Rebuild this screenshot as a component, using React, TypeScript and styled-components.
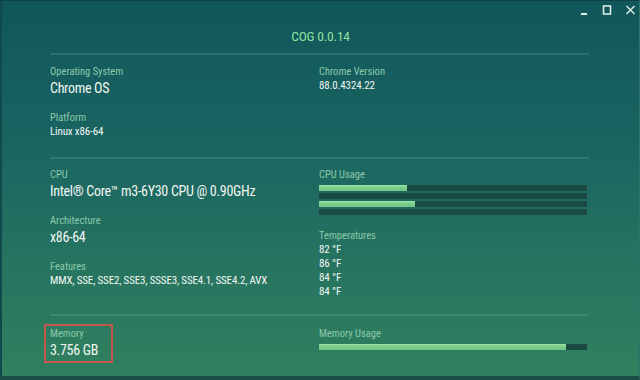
import React from 'react';
import styled, { createGlobalStyle } from 'styled-components';

const GlobalStyle = createGlobalStyle`
  html, body {
    margin: 0;
    padding: 0;
    width: 640px;
    height: 380px;
    overflow: hidden;
    font-family: "Roboto Condensed", "Liberation Sans Narrow", Roboto, sans-serif;
  }
`;

const Window = styled.div`
  width: 640px;
  height: 380px;
  box-sizing: border-box;
  background: linear-gradient(to bottom, #11565a 0%, #1a6562 40%, #267460 70%, #31805f 100%);
  border-top: 1px solid #0d4347;
  border-left: 2px solid #0f4b4d;
  border-right: 1px solid #2b7467;
  border-bottom: 4px solid #1a4d46;
  display: flex;
  flex-direction: column;
`;

const TitleBar = styled.div`
  position: relative;
  height: 52px;
  display: flex;
  align-items: flex-end;
  justify-content: center;
  padding-bottom: 9px;
  box-sizing: border-box;
`;

const Title = styled.div`
  color: #8ee29c;
  font-size: 13.5px;
  line-height: 16px;
  letter-spacing: -0.2px;
`;

const Controls = styled.div`
  position: absolute;
  top: 3px;
  right: 3px;
  display: flex;
  gap: 13px;
  align-items: center;
`;

const Content = styled.div`
  padding: 0 50px 0 48px;
  display: flex;
  flex-direction: column;
`;

const Section = styled.section<{ $top: number; $height: number }>`
  border-top: 2px solid rgba(120, 190, 160, 0.22);
  padding-top: ${(p) => p.$top}px;
  height: ${(p) => p.$height}px;
  box-sizing: border-box;
  display: grid;
  grid-template-columns: 269px 268px;
  align-items: start;
`;

const Column = styled.div`
  display: flex;
  flex-direction: column;
  gap: 14px;
`;

const Field = styled.div`
  position: relative;
  display: flex;
  flex-direction: column;
  gap: 1px;
`;

const Marker = styled.div`
  position: absolute;
  left: -6px;
  top: -3px;
  width: 69px;
  height: 39px;
  box-sizing: border-box;
  border: 2px solid #c4584c;
`;

const Label = styled.div`
  color: #8cc9a9;
  font-size: 10.5px;
  line-height: 13px;
`;

const Value = styled.div<{ $big?: boolean }>`
  color: #f2f6f2;
  font-size: ${(p) => (p.$big ? '14px' : '11px')};
  line-height: ${(p) => (p.$big ? '18px' : '14px')};
  letter-spacing: ${(p) => (p.$big ? '-0.3px' : '-0.15px')};
`;

const Bars = styled.div`
  display: flex;
  flex-direction: column;
  gap: 2px;
  margin-top: 3px;
`;

const Track = styled.div`
  height: 6px;
  background: #1b4a43;
`;

const Fill = styled.div`
  height: 100%;
  background: linear-gradient(to bottom, #9fe3a6 0%, #7dd08a 40%, #74c583 100%);
`;

const Temps = styled.div`
  display: flex;
  flex-direction: column;
`;

function Bar({ pct }: { pct: number }) {
  return (
    <Track>
      <Fill style={{ width: `${pct}%` }} />
    </Track>
  );
}

const iconColor = '#d9ece6';

export default function App() {
  return (
    <>
      <GlobalStyle />
      <Window>
        <TitleBar>
          <Title>COG 0.0.14</Title>
          <Controls>
            <svg width="10" height="12" viewBox="0 0 10 12">
              <rect x="2" y="9" width="6" height="2" fill={iconColor} />
            </svg>
            <svg width="10" height="12" viewBox="0 0 10 12">
              <rect x="1.5" y="2" width="7" height="8" fill="none" stroke={iconColor} strokeWidth="1.6" />
            </svg>
            <svg width="11" height="12" viewBox="0 0 11 12">
              <path d="M1.5 2 L9.5 10 M9.5 2 L1.5 10" stroke={iconColor} strokeWidth="1.5" />
            </svg>
          </Controls>
        </TitleBar>
        <Content>
          <Section $top={10} $height={104}>
            <Column>
              <Field>
                <Label>Operating System</Label>
                <Value $big>Chrome OS</Value>
              </Field>
              <Field>
                <Label>Platform</Label>
                <Value>Linux x86-64</Value>
              </Field>
            </Column>
            <Column>
              <Field>
                <Label>Chrome Version</Label>
                <Value>88.0.4324.22</Value>
              </Field>
            </Column>
          </Section>
          <Section $top={9} $height={157}>
            <Column>
              <Field>
                <Label>CPU</Label>
                <Value $big>Intel® Core™ m3-6Y30 CPU @ 0.90GHz</Value>
              </Field>
              <Field>
                <Label>Architecture</Label>
                <Value $big>x86-64</Value>
              </Field>
              <Field>
                <Label>Features</Label>
                <Value>MMX, SSE, SSE2, SSE3, SSSE3, SSE4.1, SSE4.2, AVX</Value>
              </Field>
            </Column>
            <Column>
              <Field>
                <Label>CPU Usage</Label>
                <Bars>
                  <Bar pct={33} />
                  <Bar pct={0} />
                  <Bar pct={36} />
                  <Bar pct={0} />
                </Bars>
              </Field>
              <Field>
                <Label>Temperatures</Label>
                <Temps>
                  <Value>82 °F</Value>
                  <Value>86 °F</Value>
                  <Value>84 °F</Value>
                  <Value>84 °F</Value>
                </Temps>
              </Field>
            </Column>
          </Section>
          <Section $top={11} $height={62}>
            <Column>
              <Field>
                <Marker />
                <Label>Memory</Label>
                <Value $big>3.756 GB</Value>
              </Field>
            </Column>
            <Column>
              <Field>
                <Label>Memory Usage</Label>
                <Bars>
                  <Bar pct={92} />
                </Bars>
              </Field>
            </Column>
          </Section>
        </Content>
      </Window>
    </>
  );
}
